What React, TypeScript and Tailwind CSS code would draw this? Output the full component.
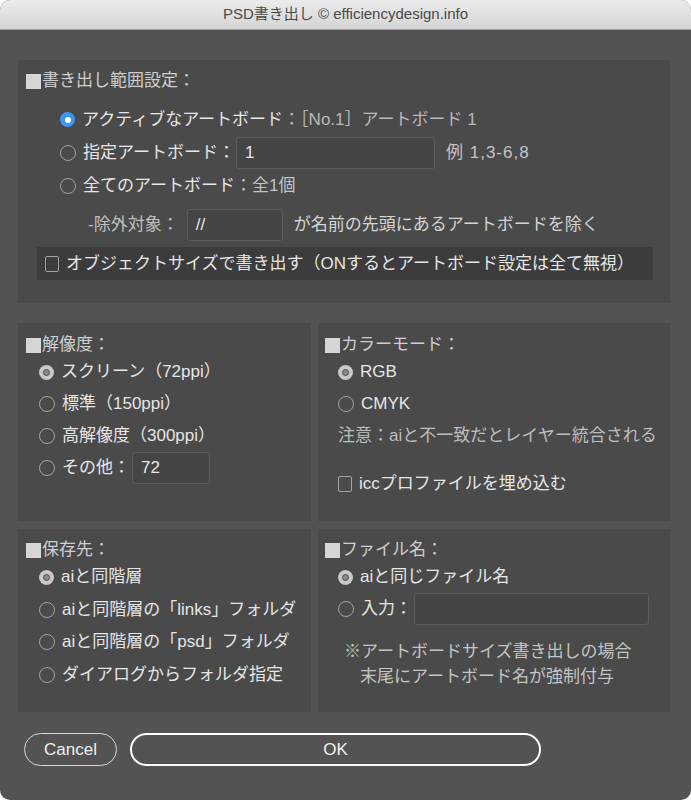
import React from "react";

type RS = "blue" | "on" | "off";

function Radio({ s }: { s: RS }) {
  if (s === "blue")
    return (
      <span className="flex h-[15px] w-[15px] shrink-0 items-center justify-center rounded-full bg-[#3d97f5]">
        <span className="h-[6px] w-[6px] rounded-full bg-white" />
      </span>
    );
  if (s === "on")
    return (
      <span className="flex h-[15px] w-[15px] shrink-0 items-center justify-center rounded-full bg-[#c8c8c8]">
        <span className="h-[7px] w-[7px] rounded-full border-[1.5px] border-[#4e4e4e] bg-[#8a8a8a]" />
      </span>
    );
  return <span className="h-[16px] w-[16px] shrink-0 rounded-full border-[1.5px] border-[#a3a3a3]" />;
}

function Check() {
  return <span className="h-[16px] w-[14px] shrink-0 rounded-[2px] border-[1.5px] border-[#a3a3a3]" />;
}

function Field({ w, value }: { w: string; value?: string }) {
  return (
    <div
      className={`flex h-[32px] items-center rounded-[3px] border border-[#5c5c5c] bg-[#454545] pl-[8px] text-[17px] text-[#e8e8e8] ${w}`}
    >
      {value}
    </div>
  );
}

function Heading({ children, pl, pt }: { children: React.ReactNode; pl: string; pt: string }) {
  return (
    <div className={`box-content flex h-[20px] items-center leading-[20px] text-[17px] text-[#cfcfcf] ${pl} ${pt}`}>
      <span className="mr-[1px] inline-block h-[15px] w-[15px] bg-[#d6d6d6]" />
      {children}
    </div>
  );
}

function Opt({ s, children, h = "h-[32px]" }: { s: RS; children: React.ReactNode; h?: string }) {
  return (
    <div className={`flex items-center ${h}`}>
      <Radio s={s} />
      <div className="ml-[7px] flex items-center text-[17px] text-[#e6e6e6]">{children}</div>
    </div>
  );
}

export default function App() {
  return (
    <div className="h-[800px] w-[691px] bg-white font-['Liberation_Sans','Noto_Sans_CJK_JP',sans-serif]">
      <div className="flex h-[800px] w-[691px] flex-col overflow-hidden rounded-[10px] bg-[#535353]">
        {/* title bar */}
        <div className="flex h-[30px] shrink-0 items-center justify-center border-b border-[#9c9c9c] bg-gradient-to-b from-[#ebebeb] to-[#d5d5d5] text-[15px] text-[#4a4a4a]">
          PSD書き出し © efficiencydesign.info
        </div>

        <div className="flex flex-col pl-[18px] pr-[21px] pt-[30px]">
          {/* top panel */}
          <div className="h-[243px] bg-[#4a4a4a]">
            <Heading pl="pl-[8px]" pt="pt-[11px]">書き出し範囲設定：</Heading>
            <div className="mt-[12px] pl-[42px]">
              <Opt s="blue" h="h-[33px]">
                <span>アクティブなアートボード</span>
                <span className="text-[#b9b9b9]">：［No.1］アートボード 1</span>
              </Opt>
              <Opt s="off" h="h-[33px]">
                <span>指定アートボード：</span>
                <div className="ml-[1px]">
                  <Field w="w-[199px]" value="1" />
                </div>
                <span className="ml-[11px] tracking-[1px] text-[#c4c4c4]">例 1,3-6,8</span>
              </Opt>
              <Opt s="off" h="h-[33px]">
                <span>全てのアートボード</span>
                <span className="text-[#c4c4c4]">：全1個</span>
              </Opt>
            </div>
            <div className="mt-[7px] flex h-[32px] items-center pl-[70px] text-[17px]">
              <span className="text-[#c0c0c0]">-除外対象：</span>
              <div className="ml-[8px]">
                <Field w="w-[96px]" value="//" />
              </div>
              <span className="ml-[11px] text-[#d4d4d4]">が名前の先頭にあるアートボードを除く</span>
            </div>
            <div className="ml-[19px] mr-[17px] mt-[6px] flex h-[33px] items-center bg-[#3c3c3c] pl-[8px] text-[17px] text-[#e6e6e6]">
              <Check />
              <span className="ml-[7px]">オブジェクトサイズで書き出す（ONするとアートボード設定は全て無視）</span>
            </div>
          </div>

          {/* middle row */}
          <div className="mt-[20px] flex h-[198px] gap-[7px]">
            <div className="w-[293px] bg-[#4a4a4a]">
              <Heading pl="pl-[8px]" pt="pt-[12px]">解像度：</Heading>
              <div className="mt-[1px] pl-[21px]">
                <Opt s="on">スクリーン（72ppi）</Opt>
                <Opt s="off">標準（150ppi）</Opt>
                <Opt s="off">高解像度（300ppi）</Opt>
                <Opt s="off">
                  <span>その他：</span>
                  <div className="ml-[2px]">
                    <Field w="w-[78px]" value="72" />
                  </div>
                </Opt>
              </div>
            </div>
            <div className="flex-1 bg-[#4a4a4a]">
              <Heading pl="pl-[7px]" pt="pt-[12px]">カラーモード：</Heading>
              <div className="mt-[1px] pl-[20px]">
                <Opt s="on">RGB</Opt>
                <Opt s="off">CMYK</Opt>
                <div className="flex h-[32px] items-center text-[17px] text-[#bdbdbd]">注意：aiと不一致だとレイヤー統合される</div>
                <div className="mt-[16px] flex h-[32px] items-center text-[17px] text-[#e6e6e6]">
                  <Check />
                  <span className="ml-[7px]">iccプロファイルを埋め込む</span>
                </div>
              </div>
            </div>
          </div>

          {/* bottom row */}
          <div className="mt-[8px] flex h-[183px] gap-[7px]">
            <div className="w-[293px] bg-[#4a4a4a]">
              <Heading pl="pl-[8px]" pt="pt-[11px]">保存先：</Heading>
              <div className="mt-[1px] pl-[21px]">
                <Opt s="on">aiと同階層</Opt>
                <Opt s="off" h="h-[33px]">aiと同階層の「links」フォルダ</Opt>
                <Opt s="off">aiと同階層の「psd」フォルダ</Opt>
                <Opt s="off" h="h-[33px]">ダイアログからフォルダ指定</Opt>
              </div>
            </div>
            <div className="flex-1 bg-[#4a4a4a]">
              <Heading pl="pl-[7px]" pt="pt-[11px]">ファイル名：</Heading>
              <div className="mt-[1px] pl-[20px]">
                <Opt s="on">aiと同じファイル名</Opt>
                <Opt s="off">
                  <span>入力：</span>
                  <div className="ml-[2px]">
                    <Field w="w-[235px]" />
                  </div>
                </Opt>
              </div>
              <div className="mt-[15px] flex h-[24px] items-center pl-[26px] text-[17px] text-[#c4c4c4]">
                ※アートボードサイズ書き出しの場合
              </div>
              <div className="flex h-[26px] items-center pl-[42px] text-[17px] text-[#c4c4c4]">
                末尾にアートボード名が強制付与
              </div>
            </div>
          </div>

          {/* buttons */}
          <div className="mt-[21px] flex gap-[13px] pl-[6px]">
            <button className="flex h-[33px] w-[93px] items-center justify-center rounded-full border-[1.5px] border-[#d6d6d6] text-[17px] text-[#efefef]">
              Cancel
            </button>
            <button className="flex h-[33px] w-[411px] items-center justify-center rounded-full border-[2.5px] border-white text-[17px] text-[#f2f2f2]">
              OK
            </button>
          </div>
        </div>
      </div>
    </div>
  );
}
